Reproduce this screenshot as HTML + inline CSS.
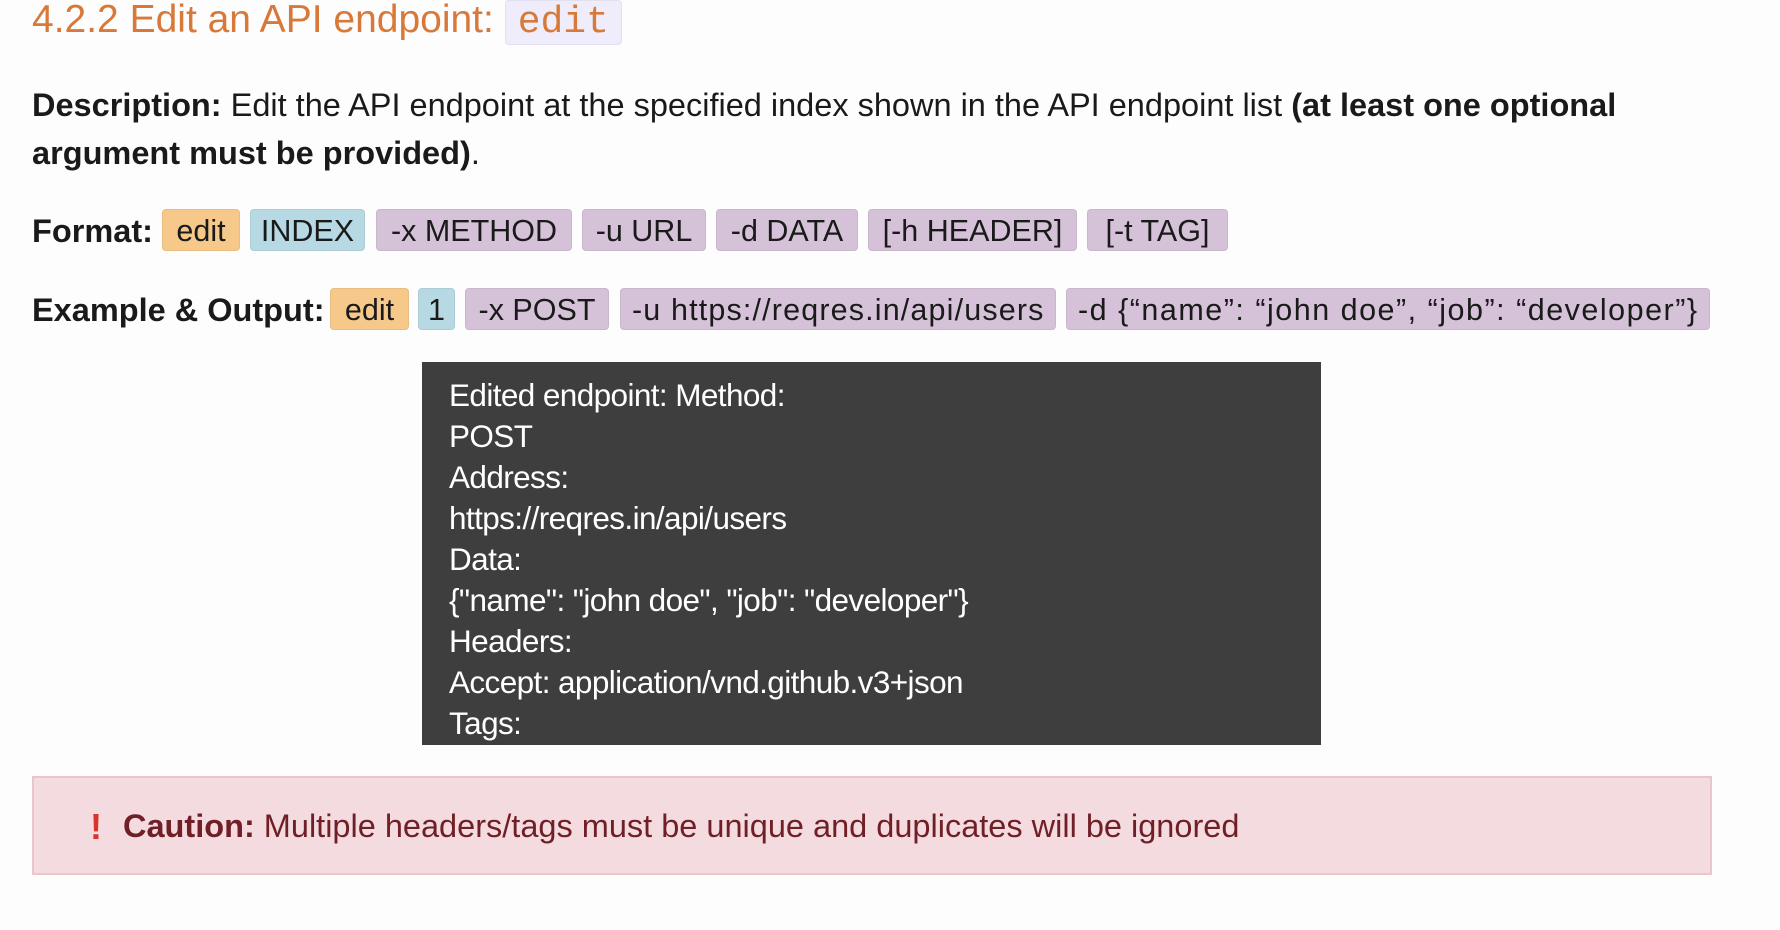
<!DOCTYPE html>
<html><head><meta charset="utf-8"><style>
body{margin:0;width:1780px;height:930px;background:#fdfdfd;font-family:"Liberation Sans",Arial,sans-serif;color:#1a1a1a;position:relative;overflow:hidden}
.a{position:absolute;white-space:nowrap}
h2{position:absolute;left:32px;top:-5px;margin:0;font-weight:normal;font-size:39px;color:#d8793a;white-space:nowrap;line-height:50px}
h2 code{font-family:"Liberation Mono",monospace;font-size:38px;background:#efedfb;border:1px solid #e2e0f0;border-radius:4px;padding:0 12px;color:#d8793a}
.p{font-size:32.5px;line-height:48px}
.b{position:absolute;height:42px;line-height:43px;font-size:30.5px;border-radius:4px;text-align:center;border:1px solid rgba(0,0,0,.06);box-sizing:border-box;white-space:nowrap}
.l{text-align:left;padding-left:11px}
.o{background:#f6c98a}.c{background:#b6d9e3}.u{background:#d5c2d8}
.dark{position:absolute;left:422px;top:362px;width:899px;height:383px;background:#3e3e3e;color:#fff;font-size:31.5px}
.dark div{position:absolute;left:27px;white-space:nowrap;letter-spacing:-0.6px}
.caution{position:absolute;left:32px;top:776px;width:1680px;height:99px;box-sizing:border-box;background:#f3dbdf;border:2px solid #ecc5cb;color:#6f1f25;font-size:32.5px}
</style></head><body>
<h2>4.2.2 Edit an API endpoint: <code>edit</code></h2>
<div class="a p" style="left:32px;top:81px"><b>Description:</b> Edit the API endpoint at the specified index shown in the API endpoint list <b>(at least one optional</b></div>
<div class="a p" style="left:32px;top:129px"><b>argument must be provided)</b>.</div>
<div class="a p" style="left:32px;top:207px"><b>Format:</b></div>
<div class="b o" style="left:162px;top:209px;width:78px">edit</div>
<div class="b c" style="left:250px;top:209px;width:115px">INDEX</div>
<div class="b u" style="left:376px;top:209px;width:196px">-x METHOD</div>
<div class="b u" style="left:582px;top:209px;width:124px">-u URL</div>
<div class="b u" style="left:716px;top:209px;width:142px">-d DATA</div>
<div class="b u" style="left:868px;top:209px;width:209px">[-h HEADER]</div>
<div class="b u" style="left:1087px;top:209px;width:141px">[-t TAG]</div>
<div class="a p" style="left:32px;top:286px"><b>Example &amp; Output:</b></div>
<div class="b o" style="left:330px;top:288px;width:79px">edit</div>
<div class="b c" style="left:418px;top:288px;width:37px">1</div>
<div class="b u" style="left:465px;top:288px;width:144px">-x POST</div>
<div class="b u l" style="left:620px;top:288px;width:436px;letter-spacing:1.15px">-u https://reqres.in/api/users</div>
<div class="b u l" style="left:1066px;top:288px;width:644px;letter-spacing:1.5px">-d {“name”: “john doe”, “job”: “developer”}</div>
<div class="dark">
<div style="top:15px">Edited endpoint: Method:</div>
<div style="top:56px">POST</div>
<div style="top:97px">Address:</div>
<div style="top:138px">https://reqres.in/api/users</div>
<div style="top:179px">Data:</div>
<div style="top:220px">{"name": "john doe", "job": "developer"}</div>
<div style="top:261px">Headers:</div>
<div style="top:302px">Accept: application/vnd.github.v3+json</div>
<div style="top:343px">Tags:</div>
</div>
<div class="caution">
<span class="a" style="left:56px;top:28px;color:#d8342c;font-weight:bold;font-size:36px">!</span>
<span class="a" style="left:89px;top:30px"><b>Caution:</b> Multiple headers/tags must be unique and duplicates will be ignored</span>
</div>
</body></html>
